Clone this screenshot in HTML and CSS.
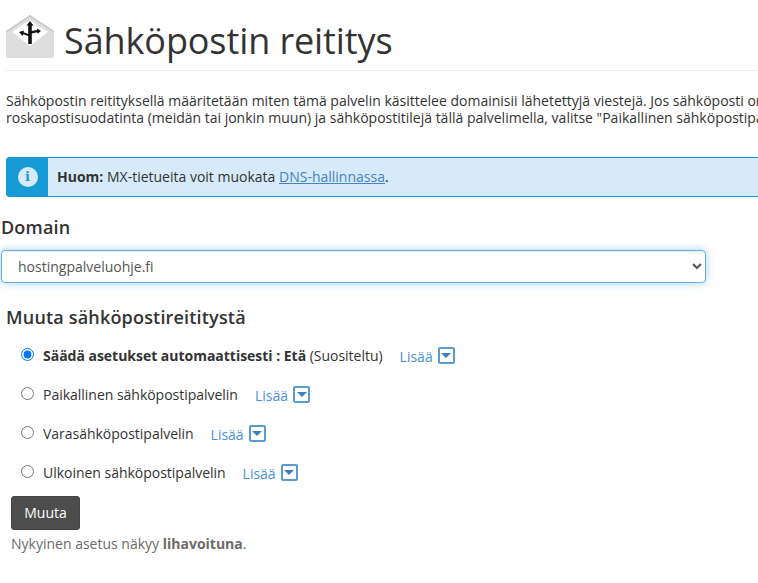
FILE: index.html
```html
<!DOCTYPE html>
<html lang="fi">
<head>
<meta charset="utf-8">
<title>Sähköpostin reititys</title>
<link rel="stylesheet" href="styles.css">
</head>
<body>
<div class="page">
  <header class="page-header">
    <svg class="page-icon" width="48" height="44" viewBox="0 0 48 44">
      <path d="M24 0 L48 16 V41 a2 2 0 0 1 -2 2 H2 a2 2 0 0 1 -2 -2 V16 Z" fill="#dedede"/>
      <path d="M24 5 L42 17 L24 31 L6 17 Z" fill="#fff"/>
      <path d="M24 0 L0 16 L1 17 L24 2 L47 17 L48 16 Z" fill="#c9c9c9"/>
      <path d="M24 6 l3.500 4.500 h-1.700 v5.500 l5.500 -1 -0.500 -1.800 4.200 2.800 -3.400 2.800 -0.400 -1.600 -5.400 1.200 V29 h-3.600 V21 l-5 -1.800 -0.600 1.800 -3.500 -4 4.800 -1.500 -0.300 1.700 4.600 1.700 V10.500 H20.500 Z" fill="#111"/>
    </svg>
    <h1 class="page-title">Sähköpostin reititys</h1>
  </header>
  <p class="intro">Sähköpostin reitityksellä määritetään miten tämä palvelin käsittelee domainisii lähetettyjä viestejä. Jos sähköposti on<br>roskapostisuodatinta (meidän tai jonkin muun) ja sähköpostitilejä tällä palvelimella, valitse "Paikallinen sähköpostipalvelin".</p>
  <div class="alert">
    <div class="alert-side"><span class="alert-icon">i</span></div>
    <div class="alert-body"><strong>Huom:</strong> MX-tietueita voit muokata <a href="#">DNS-hallinnassa</a>.</div>
  </div>
  <h2 class="domain-label">Domain</h2>
  <select class="domain-select"><option>hostingpalveluohje.fi</option></select>
  <h3 class="section-title">Muuta sähköpostireititystä</h3>
  <form class="routes">
    <div class="route"><input type="radio" name="r" checked><label><strong>Säädä asetukset automaattisesti : Etä</strong> (Suositeltu)</label><a class="more" href="#">Lisää</a><span class="caret-box"></span></div>
    <div class="route"><input type="radio" name="r"><label>Paikallinen sähköpostipalvelin</label><a class="more" href="#">Lisää</a><span class="caret-box"></span></div>
    <div class="route"><input type="radio" name="r"><label>Varasähköpostipalvelin</label><a class="more" href="#">Lisää</a><span class="caret-box"></span></div>
    <div class="route"><input type="radio" name="r"><label>Ulkoinen sähköpostipalvelin</label><a class="more" href="#">Lisää</a><span class="caret-box"></span></div>
  </form>
  <button class="btn" type="button">Muuta</button>
  <p class="note">Nykyinen asetus näkyy <strong>lihavoituna</strong>.</p>
</div>
</body>
</html>
```
FILE: styles.css
```css
html, body { margin: 0; padding: 0; background: #fff; }
body { width: 758px; height: 583px; overflow: hidden; font-family: "Open Sans", sans-serif; font-size: 14px; color: #333; }
.page { width: 758px; overflow: hidden; }
.page-header { display: flex; align-items: flex-start; gap: 10px; margin-left: 6px; border-bottom: 1px solid #eee; padding-top: 15px; height: 55px; }
.page-title { margin: 1px 0 0; font-size: 36px; font-weight: 400; line-height: 50px; letter-spacing: -0.1px; color: #333; white-space: nowrap; }
.intro { margin: 21px 0 0 6px; line-height: 17px; font-size: 14px; white-space: nowrap; }
.alert { display: flex; margin: 31px 0 0 6px; width: 800px; height: 40px; box-sizing: border-box; border: 1px solid #179bd7; border-radius: 3px; background: #d6ebf9; }
.alert-side { width: 41px; background: #179bd7; display: flex; align-items: center; justify-content: center; }
.alert-icon { width: 20px; height: 20px; border-radius: 50%; background: #d6ebf9; color: #179bd7; font-family: "DejaVu Serif", serif; font-weight: 700; font-size: 13px; line-height: 20px; text-align: center; }
.alert-body { padding-left: 9px; line-height: 37px; }
.alert-body a { color: #4a82c3; }
.domain-label { margin: 19px 0 0 1px; font-size: 18px; font-weight: 550; line-height: 22px; letter-spacing: 0.18px; color: #333; }
.domain-select { display: block; margin: 12px 0 0 1px; width: 705px; height: 33px; box-sizing: border-box; padding: 0 12px; border: 1px solid #66afe9; border-radius: 4px; background: #fff; color: #555; font-family: "Open Sans", sans-serif; font-size: 14px; box-shadow: inset 0 1px 1px rgba(0,0,0,.075), 0 0 8px rgba(102,175,233,.6); outline: none; }
.section-title { margin: 22px 0 0 6px; font-size: 18px; font-weight: 550; line-height: 24px; letter-spacing: 0.18px; color: #333; }
.routes { margin: 8px 0 0 21px; }
.route { display: flex; align-items: center; height: 39px; }
.route input { margin: 0 9px 0 0; width: 13px; height: 13px; position: relative; top: -2px; }
.route label { line-height: 20px; letter-spacing: -0.02px; position: relative; top: -1px; }
.more { margin-left: 17px; color: #4a90d9; text-decoration: none; }
.caret-box { position: relative; top: -1px; margin-left: 5px; width: 17px; height: 17px; box-sizing: border-box; border: 2px solid #5b9bd5; border-radius: 2px; background: #fff; display: flex; align-items: center; justify-content: center; }
.caret-box::after { content: ""; border-left: 5px solid transparent; border-right: 5px solid transparent; border-top: 5px solid #3f7fbf; }
.btn { display: block; margin: 3px 0 0 11px; width: 69px; height: 34px; border: 1px solid #444; border-radius: 3px; background: #4d4d4d; color: #fff; font-family: "Open Sans", sans-serif; font-size: 14px; padding: 0 0 2px; }
.note { margin: 4px 0 0 11px; color: #6b6b6b; line-height: 20px; }
```
